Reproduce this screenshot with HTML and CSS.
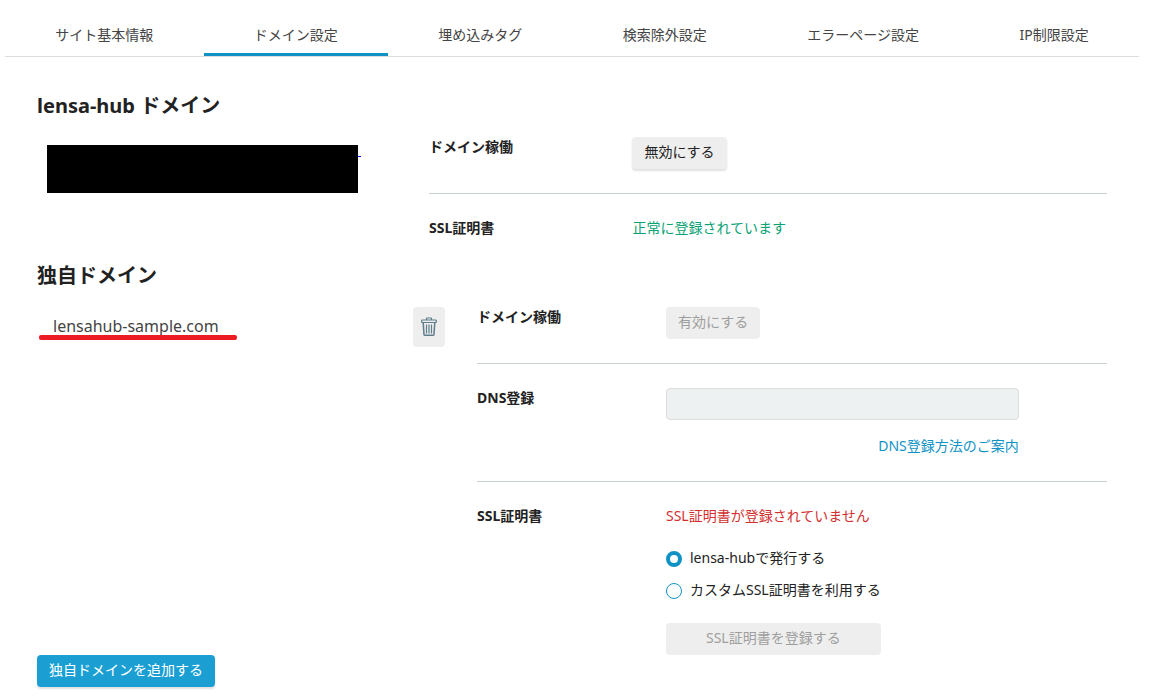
FILE: index.html
```html
<!DOCTYPE html>
<html lang="ja">
<head>
<meta charset="utf-8">
<meta name="viewport" content="width=device-width, initial-scale=1">
<title>ドメイン設定</title>
<link rel="stylesheet" href="styles.css">
</head>
<body>
<nav class="tabs">
  <a class="tab" href="#">サイト基本情報</a>
  <a class="tab tab-active" href="#" aria-current="page">ドメイン設定</a>
  <a class="tab" href="#">埋め込みタグ</a>
  <a class="tab" href="#">検索除外設定</a>
  <a class="tab" href="#">エラーページ設定</a>
  <a class="tab" href="#">IP制限設定</a>
</nav>
<main class="content">
  <section class="section">
    <h2 class="heading">lensa-hub ドメイン</h2>
    <div class="domain domain-hub">
      <div class="redacted"></div>
      <dl class="settings">
        <div class="row">
          <dt class="label">ドメイン稼働</dt>
          <dd class="value"><button class="button button-raised" type="button">無効にする</button></dd>
        </div>
        <div class="row">
          <dt class="label">SSL証明書</dt>
          <dd class="value status-ok">正常に登録されています</dd>
        </div>
      </dl>
    </div>
  </section>
  <section class="section">
    <h2 class="heading">独自ドメイン</h2>
    <div class="domain domain-custom">
      <div class="domain-name"><span class="marked">lensahub-sample.com</span></div>
      <button class="delete" type="button" aria-label="削除">
        <svg class="delete-icon" viewBox="0 0 16 20" width="16" height="20" fill="none" stroke="#607d8b">
          <path d="M5.500 3V1.500Q5.500 1 6 1h4q.5 0 .5.500V3" stroke-width="1.200"/>
          <rect x=".7" y="3" width="14.600" height="2.500" rx=".5" stroke-width="1.200"/>
          <path d="M2.200 5.500 3 17.400q.1.900 1 .9h8q.9 0 1-.9l.8-11.900" stroke-width="1.500"/>
          <path d="M5.500 7.500v9M8 7.500v9M10.500 7.500v9" stroke-width="1.200"/>
        </svg>
      </button>
      <dl class="settings">
        <div class="row">
          <dt class="label">ドメイン稼働</dt>
          <dd class="value"><button class="button" type="button" disabled>有効にする</button></dd>
        </div>
        <div class="row">
          <dt class="label"><label for="dns">DNS登録</label></dt>
          <dd class="value dns">
            <input class="input" id="dns" type="text" disabled>
            <a class="guide" href="#">DNS登録方法のご案内</a>
          </dd>
        </div>
        <div class="row">
          <dt class="label">SSL証明書</dt>
          <dd class="value ssl">
            <p class="status-error">SSL証明書が登録されていません</p>
            <div class="options">
              <label class="option"><input class="radio" type="radio" name="ssl" checked><span class="option-text">lensa-hubで発行する</span></label>
              <label class="option"><input class="radio" type="radio" name="ssl"><span class="option-text">カスタムSSL証明書を利用する</span></label>
            </div>
            <button class="button" type="button" disabled>SSL証明書を登録する</button>
          </dd>
        </div>
      </dl>
    </div>
  </section>
  <button class="button button-primary" type="button">独自ドメインを追加する</button>
</main>
</body>
</html>
```

FILE: styles.css
```css
* {
  box-sizing: border-box;
}

body {
  margin: 0;
  background: #fff;
  color: #222;
  font: 14px/20px "Noto Sans", "Noto Sans CJK JP", sans-serif;
}

dl, dd, p {
  margin: 0;
}

button, input {
  font: inherit;
}

a {
  text-decoration: none;
}

.tabs {
  display: flex;
  margin: 0 10px 0 5px;
  padding-top: 16px;
  border-bottom: 1px solid #ddd;
}

.tab {
  flex: 1 1 auto;
  padding: 9px 0 8px;
  border-bottom: 3px solid transparent;
  color: #444;
  text-align: center;
}

.tab-active {
  border-bottom-color: #1192c5;
}

.content {
  padding: 32px 42px 12px 37px;
}

.heading {
  margin: 0 0 14px;
  font-size: 20px;
  line-height: 34px;
}

.section + .section {
  margin-top: 21px;
}

.domain {
  display: grid;
  align-items: start;
}

.domain-hub {
  grid-template-columns: 392fr 678fr;
}

.domain-custom {
  grid-template-columns: 376fr 32px 662fr;
}

.domain-custom .settings {
  margin-left: 32px;
}

.redacted {
  position: relative;
  max-width: 311px;
  height: 48px;
  margin: 8px 10px;
  background: #000;
}

.redacted::after {
  content: "";
  position: absolute;
  left: 100%;
  top: 11px;
  width: 3px;
  height: 1px;
  background: #00f;
}

.row {
  display: grid;
  grid-template-columns: 30% 1fr;
  align-items: start;
}

.row + .row {
  margin-top: 24px;
  padding-top: 24px;
  border-top: 1px solid #c8d0d0;
}

.label {
  font-weight: bold;
}

.value {
  display: grid;
  justify-items: start;
}

.status-ok {
  color: #09a275;
}

.status-error {
  padding-bottom: 1px;
  color: #d32f2f;
}

.button {
  height: 32px;
  padding: 0 12px 3px;
  border: 0;
  border-radius: 4px;
  background: #eee;
  color: #222;
}

.button:disabled {
  color: #9e9e9e;
}

.button-raised {
  box-shadow: 0 2px 2px rgba(0, 0, 0, .12);
}

.button-primary {
  display: block;
  background: #1b9fd3;
  color: #fff;
  box-shadow: 0 2px 2px rgba(0, 0, 0, .12);
}

.domain-name {
  padding: 7px 16px;
  color: #444;
  font-size: 16px;
  line-height: 24px;
}

.marked {
  position: relative;
}

.marked::after {
  content: "";
  position: absolute;
  left: -14px;
  right: -18px;
  bottom: -3px;
  height: 5px;
  border-radius: 2px;
  background: #ed1c24;
}

.delete {
  display: flex;
  align-items: center;
  justify-content: center;
  height: 40px;
  padding: 0;
  border: 0;
  border-radius: 4px;
  background: #eee;
}

.dns {
  width: 80%;
  row-gap: 16px;
  padding-bottom: 1px;
}

.input {
  width: 100%;
  height: 32px;
  padding: 0 8px;
  border: 1px solid #ddd;
  border-radius: 4px;
  background: #edf1f2;
}

.guide {
  justify-self: end;
  color: #1192c5;
}

.ssl {
  justify-self: start;
  justify-items: stretch;
  row-gap: 16px;
}

.option {
  display: flex;
  align-items: center;
  gap: 8px;
  height: 32px;
}

.option-text {
  padding-bottom: 3px;
}

.radio {
  appearance: none;
  width: 16px;
  height: 16px;
  margin: 0;
  border: 1px solid #1192c5;
  border-radius: 50%;
  background: #fff;
}

.radio:checked {
  border-width: 4px;
}
```
